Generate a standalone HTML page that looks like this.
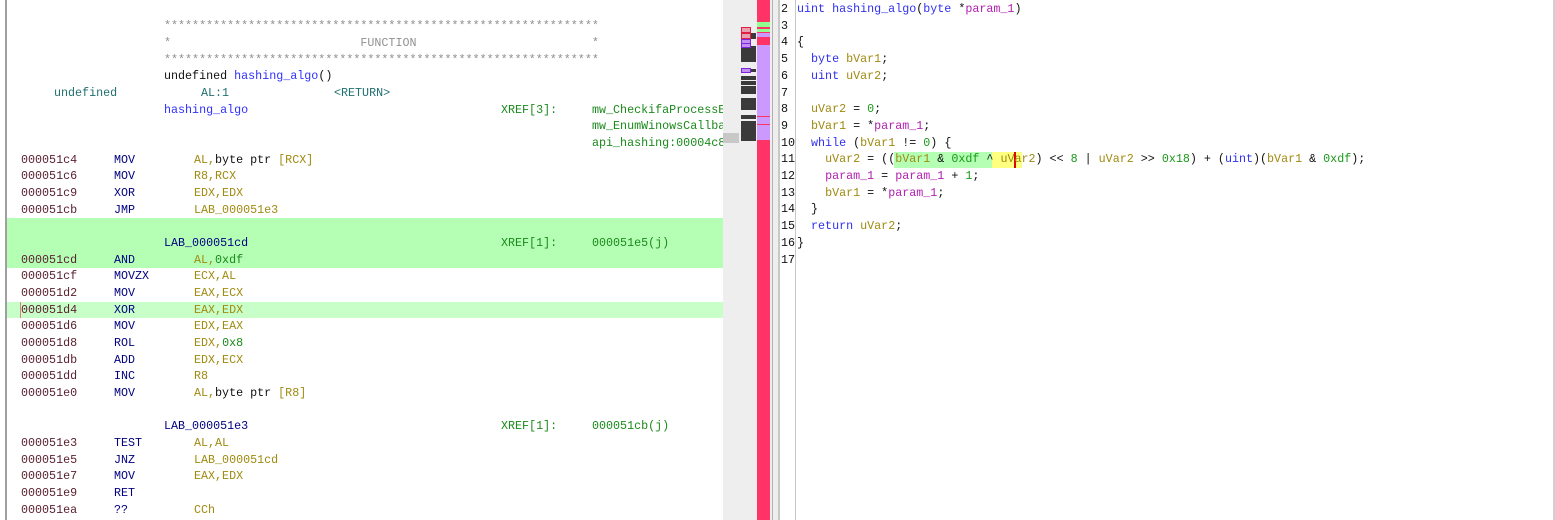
<!DOCTYPE html>
<html><head><style>
body{margin:0;width:1555px;height:520px;background:#fff;position:relative;overflow:hidden;font-family:"Liberation Mono",monospace;font-size:11.7px}
.r{position:absolute;white-space:pre;line-height:16.7px;height:16.7px}
.a{color:#5a2030}.m{color:#000080}.o{color:#a08a10}.g{color:#1a8a1a}.b{color:#3030ff}.s{color:#909090}.t{color:#207070}.n{color:#111}
.k{color:#3030ee}.v{color:#a08a10}.p{color:#b020b0}.c{color:#1a9a1a}
.mm{position:absolute;background:#3a3a3a;left:741px;width:15px}
</style></head><body>
<div style="position:absolute;left:5px;top:0;width:2px;height:520px;background:#a0a0a0"></div>
<div style="position:absolute;left:7px;top:218px;width:716px;height:50px;background:#b5ffb5"></div>
<div style="position:absolute;left:7px;top:302px;width:716px;height:16px;background:#c8ffc8"></div>
<div style="position:absolute;left:20px;top:302px;width:1px;height:16px;background:#e08080"></div>

<div class="r s" style="left:164px;top:18px">**************************************************************</div>
<div class="r s" style="left:164px;top:35px">*                           FUNCTION                         *</div>
<div class="r s" style="left:164px;top:52px">**************************************************************</div>
<div class="r n" style="left:164px;top:68px">undefined <span class="b">hashing_algo</span>()</div>
<div class="r t" style="left:54px;top:85px">undefined</div>
<div class="r t" style="left:201px;top:85px">AL:1</div>
<div class="r t" style="left:334px;top:85px">&lt;RETURN&gt;</div>
<div class="r b" style="left:164px;top:102px">hashing_algo</div>
<div class="r g" style="left:501px;top:102px">XREF[3]:</div>
<div class="r g" style="left:592px;top:102px">mw_CheckifaProcessE</div>
<div class="r g" style="left:592px;top:118px">mw_EnumWinowsCallba</div>
<div class="r g" style="left:592px;top:135px">api_hashing:00004c8</div>

<div class="r a" style="left:21px;top:152px">000051c4</div><div class="r m" style="left:114px;top:152px">MOV</div><div class="r o" style="left:194px;top:152px">AL,<span class="n">byte ptr </span>[RCX]</div>
<div class="r a" style="left:21px;top:168px">000051c6</div><div class="r m" style="left:114px;top:168px">MOV</div><div class="r o" style="left:194px;top:168px">R8,RCX</div>
<div class="r a" style="left:21px;top:185px">000051c9</div><div class="r m" style="left:114px;top:185px">XOR</div><div class="r o" style="left:194px;top:185px">EDX,EDX</div>
<div class="r a" style="left:21px;top:202px">000051cb</div><div class="r m" style="left:114px;top:202px">JMP</div><div class="r" style="left:194px;top:202px;color:#a08a10">LAB_000051e3</div>

<div class="r m" style="left:164px;top:235px">LAB_000051cd</div>
<div class="r g" style="left:501px;top:235px">XREF[1]:</div>
<div class="r g" style="left:592px;top:235px">000051e5(j)</div>
<div class="r a" style="left:21px;top:252px">000051cd</div><div class="r m" style="left:114px;top:252px">AND</div><div class="r o" style="left:194px;top:252px">AL,<span class="g">0xdf</span></div>
<div class="r a" style="left:21px;top:268px">000051cf</div><div class="r m" style="left:114px;top:268px">MOVZX</div><div class="r o" style="left:194px;top:268px">ECX,AL</div>
<div class="r a" style="left:21px;top:285px">000051d2</div><div class="r m" style="left:114px;top:285px">MOV</div><div class="r o" style="left:194px;top:285px">EAX,ECX</div>
<div class="r a" style="left:21px;top:302px">000051d4</div><div class="r m" style="left:114px;top:302px">XOR</div><div class="r o" style="left:194px;top:302px">EAX,EDX</div>
<div class="r a" style="left:21px;top:318px">000051d6</div><div class="r m" style="left:114px;top:318px">MOV</div><div class="r o" style="left:194px;top:318px">EDX,EAX</div>
<div class="r a" style="left:21px;top:335px">000051d8</div><div class="r m" style="left:114px;top:335px">ROL</div><div class="r o" style="left:194px;top:335px">EDX,<span class="g">0x8</span></div>
<div class="r a" style="left:21px;top:352px">000051db</div><div class="r m" style="left:114px;top:352px">ADD</div><div class="r o" style="left:194px;top:352px">EDX,ECX</div>
<div class="r a" style="left:21px;top:368px">000051dd</div><div class="r m" style="left:114px;top:368px">INC</div><div class="r o" style="left:194px;top:368px">R8</div>
<div class="r a" style="left:21px;top:385px">000051e0</div><div class="r m" style="left:114px;top:385px">MOV</div><div class="r o" style="left:194px;top:385px">AL,<span class="n">byte ptr </span>[R8]</div>

<div class="r m" style="left:164px;top:418px">LAB_000051e3</div>
<div class="r g" style="left:501px;top:418px">XREF[1]:</div>
<div class="r g" style="left:592px;top:418px">000051cb(j)</div>
<div class="r a" style="left:21px;top:435px">000051e3</div><div class="r m" style="left:114px;top:435px">TEST</div><div class="r o" style="left:194px;top:435px">AL,AL</div>
<div class="r a" style="left:21px;top:452px">000051e5</div><div class="r m" style="left:114px;top:452px">JNZ</div><div class="r" style="left:194px;top:452px;color:#a08a10">LAB_000051cd</div>
<div class="r a" style="left:21px;top:468px">000051e7</div><div class="r m" style="left:114px;top:468px">MOV</div><div class="r o" style="left:194px;top:468px">EAX,EDX</div>
<div class="r a" style="left:21px;top:485px">000051e9</div><div class="r m" style="left:114px;top:485px">RET</div>
<div class="r a" style="left:21px;top:502px">000051ea</div><div class="r m" style="left:114px;top:502px">??</div><div class="r o" style="left:194px;top:502px">CCh</div>

<!-- minimap -->
<div style="position:absolute;left:723px;top:0;width:34px;height:520px;background:#eeeeee"></div>
<div style="position:absolute;left:723px;top:133px;width:16px;height:10px;background:#c8c8c8"></div>
<div style="position:absolute;left:741px;top:136px;width:8px;height:2px;background:#b8c8d8"></div>
<div class="mm" style="top:33px;height:6px"></div>
<div class="mm" style="top:46px;height:16px"></div>
<div class="mm" style="top:69px;height:3px"></div>
<div class="mm" style="top:76px;height:4px"></div>
<div class="mm" style="top:81px;height:4px"></div>
<div class="mm" style="top:86px;height:8px"></div>
<div class="mm" style="top:98px;height:12px"></div>
<div class="mm" style="top:115px;height:4px"></div>
<div class="mm" style="top:121px;height:20px"></div>
<div style="position:absolute;left:741px;top:27px;width:8px;height:4px;border:1px solid #e02040;background:#e8a0b0"></div>
<div style="position:absolute;left:741px;top:33px;width:8px;height:4px;border:1px solid #e02040;background:#e8a0b0"></div>
<div style="position:absolute;left:741px;top:39px;width:8px;height:3px;border:1px solid #8020e0;background:#c090f0"></div>
<div style="position:absolute;left:741px;top:43px;width:8px;height:3px;border:1px solid #8020e0;background:#c090f0"></div>
<div style="position:absolute;left:741px;top:68px;width:8px;height:3px;border:1px solid #8020e0;background:#c090f0"></div>
<div style="position:absolute;left:757px;top:0;width:13px;height:520px;background:#ff3366"></div>
<div style="position:absolute;left:757px;top:22px;width:13px;height:5px;background:#90ff90"></div>
<div style="position:absolute;left:757px;top:29px;width:13px;height:3px;background:#90ff90"></div>
<div style="position:absolute;left:757px;top:33px;width:13px;height:4px;background:#cc99ff"></div>
<div style="position:absolute;left:757px;top:45px;width:13px;height:95px;background:#cc99ff"></div>
<div style="position:absolute;left:757px;top:116px;width:13px;height:1px;background:#ff3366"></div>
<div style="position:absolute;left:757px;top:124px;width:13px;height:1px;background:#ff3366"></div>
<div style="position:absolute;left:770px;top:0;width:10px;height:520px;background:#eeeeee"></div>
<div style="position:absolute;left:772px;top:0;width:1px;height:520px;background:#b0b0b0"></div>
<div style="position:absolute;left:778px;top:0;width:2px;height:520px;background:#c8c8c8"></div>
<div style="position:absolute;left:795px;top:0;width:1px;height:520px;background:#c8c8c8"></div>

<!-- decompiler -->
<div class="r n" style="left:781px;top:1px;line-height:16.7px">2
3
4
5
6
7
8
9
10
11
12
13
14
15
16
17</div>
<div style="position:absolute;left:894px;top:152px;width:100px;height:16px;background:#b5ffb5"></div>
<div style="position:absolute;left:992px;top:152px;width:30px;height:16px;background:#ffff80"></div>
<div style="position:absolute;left:1014px;top:152px;width:2px;height:16px;background:#e00000"></div>
<div class="r n" style="left:797px;top:1px;line-height:16.7px;height:auto"><span class="k">uint hashing_algo</span>(<span class="k">byte</span> *<span class="p">param_1</span>)

{
  <span class="k">byte</span> <span class="v">bVar1</span>;
  <span class="k">uint</span> <span class="v">uVar2</span>;

  <span class="v">uVar2</span> = <span class="c">0</span>;
  <span class="v">bVar1</span> = *<span class="p">param_1</span>;
  <span class="k">while</span> (<span class="v">bVar1</span> != <span class="c">0</span>) {
    <span class="v">uVar2</span> = ((<span class="v">bVar1</span> &amp; <span class="c">0xdf</span> ^ <span class="v">uVar2</span>) &lt;&lt; <span class="c">8</span> | <span class="v">uVar2</span> &gt;&gt; <span class="c">0x18</span>) + (<span class="k">uint</span>)(<span class="v">bVar1</span> &amp; <span class="c">0xdf</span>);
    <span class="p">param_1</span> = <span class="p">param_1</span> + <span class="c">1</span>;
    <span class="v">bVar1</span> = *<span class="p">param_1</span>;
  }
  <span class="k">return</span> <span class="v">uVar2</span>;
}
</div>
<div style="position:absolute;left:1553px;top:0;width:2px;height:520px;background:#d0d0d0"></div>
</body></html>
